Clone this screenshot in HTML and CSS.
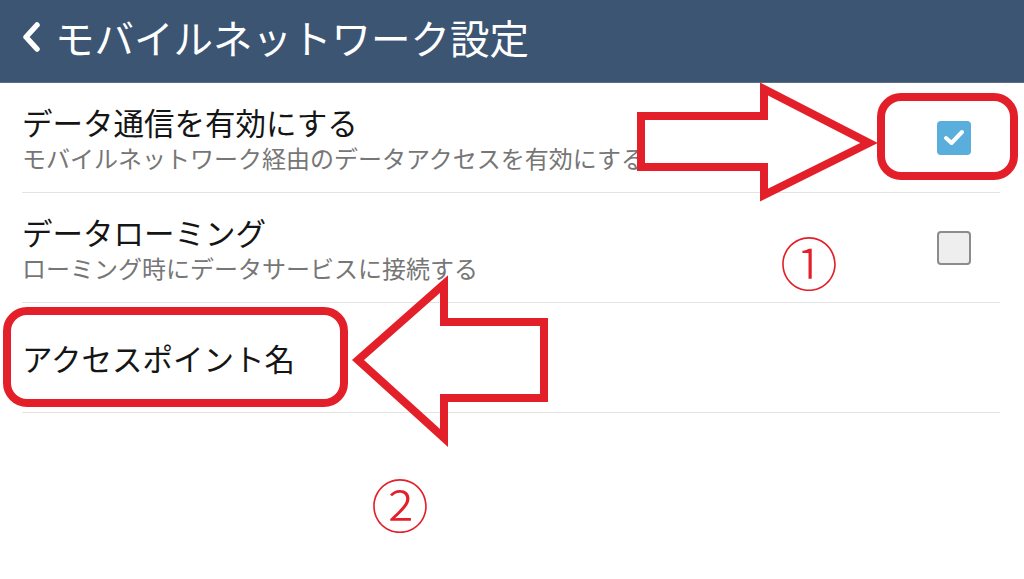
FILE: index.html
```html
<!DOCTYPE html>
<html lang="ja">
<head>
  <meta charset="UTF-8">
  <meta name="viewport" content="width=device-width, initial-scale=1.0">
  <title>モバイルネットワーク設定</title>
  <link rel="stylesheet" href="styles.css">
</head>
<body>
  <header class="app-bar">
    <svg class="back" width="22" height="30" viewBox="0 0 22 30">
      <polyline points="16,3 5,15 16,27" fill="none" stroke="#fff" stroke-width="5.5" stroke-linecap="round" stroke-linejoin="round"/>
    </svg>
    <h1>モバイルネットワーク設定</h1>
  </header>

  <ul class="settings">
    <li class="setting">
      <div class="setting-text">
        <div class="setting-title">データ通信を有効にする</div>
        <div class="setting-summary">モバイルネットワーク経由のデータアクセスを有効にする</div>
      </div>
      <span class="checkbox checked">
        <svg width="22" height="18" viewBox="0 0 22 18">
          <polyline points="3,9 8.5,14 19,3" fill="none" stroke="#fff" stroke-width="4" stroke-linecap="round" stroke-linejoin="round"/>
        </svg>
      </span>
    </li>
    <li class="setting">
      <div class="setting-text">
        <div class="setting-title">データローミング</div>
        <div class="setting-summary">ローミング時にデータサービスに接続する</div>
      </div>
      <span class="checkbox"></span>
    </li>
    <li class="setting">
      <div class="setting-text">
        <div class="setting-title">アクセスポイント名</div>
      </div>
    </li>
  </ul>

  <!-- red annotations drawn over the screenshot -->
  <svg class="annotations" width="1024" height="579" viewBox="0 0 1024 579">
    <g fill="none" stroke="#e3202a" stroke-width="8">
      <polygon points="641,116 764,116 764,89 869,143 764,195 764,167 641,167"/>
      <rect x="881" y="97" width="133" height="79" rx="20"/>
      <polygon points="358,360 444,284 444,322 544,322 544,398 444,398 444,438"/>
      <rect x="7" y="311" width="337" height="92" rx="20"/>
    </g>
    <text class="marker" x="809" y="261">①</text>
    <text class="marker" x="400" y="503">②</text>
  </svg>
</body>
</html>
```

FILE: styles.css
```css
body {
  margin: 0;
  width: 1024px;
  height: 579px;
  overflow: hidden;
  position: relative;
  background-color: #fff;
  font-family: "Noto Sans CJK JP", "Noto Sans", sans-serif;
}

.app-bar {
  height: 83px;
  box-sizing: border-box;
  display: flex;
  align-items: center;
  padding: 0 0 8px 21px;
  background-color: #3c5573;
  border-bottom: 1px solid #5b6f86;
  color: #fff;
}

.back {
  display: block;
}

.app-bar h1 {
  margin: 0 0 0 12px;
  font-size: 39.5px;
  font-weight: normal;
  line-height: 1;
}

.settings {
  list-style: none;
  margin: 0;
  padding: 0;
}

.setting {
  display: flex;
  align-items: center;
  height: 110px;
  box-sizing: border-box;
  margin: 0 24px 0 22px;
  border-bottom: 1px solid #e3e3e3;
}

.setting-title {
  font-size: 30.5px;
  line-height: 36px;
  color: #151515;
}

.setting-summary {
  margin-top: 4px;
  font-size: 24px;
  line-height: 28px;
  color: #767676;
  white-space: nowrap;
}

.checkbox {
  width: 34px;
  height: 34px;
  box-sizing: border-box;
  margin-left: auto;
  margin-right: 29px;
  border-radius: 4px;
  border: 2px solid #8c8c8c;
  background-color: #eeeeee;
}

.checkbox.checked {
  display: flex;
  align-items: center;
  justify-content: center;
  border: none;
  background-color: #5aaedc;
}

.annotations {
  position: absolute;
  top: 0;
  left: 0;
  pointer-events: none;
}

.marker {
  font-family: "Noto Sans CJK JP", sans-serif;
  font-size: 58px;
  font-weight: 300;
  fill: #e3202a;
  text-anchor: middle;
  dominant-baseline: central;
}
```
